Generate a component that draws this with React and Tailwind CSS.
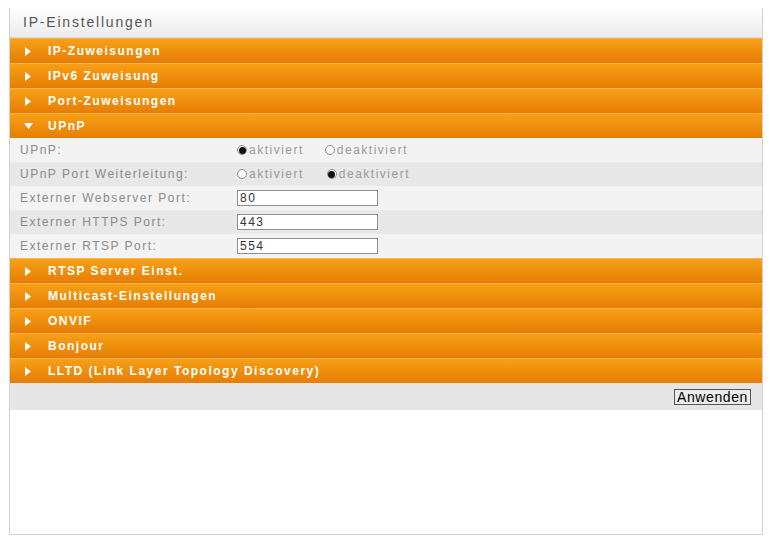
import { useState } from "react";

const sectionsTop = ["IP-Zuweisungen", "IPv6 Zuweisung", "Port-Zuweisungen"];
const sectionsBottom = [
  "RTSP Server Einst.",
  "Multicast-Einstellungen",
  "ONVIF",
  "Bonjour",
  "LLTD (Link Layer Topology Discovery)",
];

function Arrow({ open }) {
  return open ? (
    <svg width="9" height="6" viewBox="0 0 9 6" className="ml-[14px] mr-[15px]">
      <path d="M0 0 L9 0 L4.5 6 Z" fill="#fff" />
    </svg>
  ) : (
    <svg width="6" height="9" viewBox="0 0 6 9" className="ml-[15px] mr-[17px]">
      <path d="M0 0 L6 4.5 L0 9 Z" fill="#fff" />
    </svg>
  );
}

function Bar({ title, open }) {
  return (
    <div className="h-[25px] flex items-center border-t border-[#fab050] bg-gradient-to-b from-[#f7a015] to-[#e67d04] text-white font-bold text-[12px] tracking-[1.5px]">
      <Arrow open={open} />
      <span>{title}</span>
    </div>
  );
}

function Radio({ checked, label, onClick }) {
  return (
    <button onClick={onClick} className="flex items-center">
      <span className="w-[10px] h-[10px] rounded-full border border-[#8c8c8c] bg-white flex items-center justify-center">
        {checked && <span className="w-[7px] h-[7px] rounded-full bg-[#111]" />}
      </span>
      <span className="ml-[2px]">{label}</span>
    </button>
  );
}

function Row({ label, shade, children }) {
  return (
    <div className={`h-[24px] flex items-center ${shade ? "bg-[#e8e8e8]" : "bg-[#f3f3f3]"}`}>
      <div className="w-[227px] pl-[10px] text-[#8a8a8a]">{label}</div>
      <div className="flex items-center">{children}</div>
    </div>
  );
}

export default function App() {
  const [upnp, setUpnp] = useState(true);
  const [fwd, setFwd] = useState(false);
  const [web, setWeb] = useState("80");
  const [https, setHttps] = useState("443");
  const [rtsp, setRtsp] = useState("554");

  const inputCls =
    "w-[141px] h-[16px] border border-[#8f8f8f] bg-white px-[2px] text-[12px] text-[#333] outline-none";

  return (
    <div className="w-[770px] h-[537px] bg-white pt-[8px] pl-[9px]" style={{ fontFamily: '"Liberation Sans", Arial, sans-serif' }}>
      <div className="w-[754px] h-[527px] border-l border-r border-b border-[#d2d2d2] flex flex-col">
        <div className="h-[30px] flex items-center pl-[13px] bg-gradient-to-b from-white to-[#ebebeb] border-b border-[#d6dae8] text-[14px] tracking-[1.8px] text-[#555]">
          IP-Einstellungen
        </div>

        {sectionsTop.map((t) => (
          <Bar key={t} title={t} />
        ))}
        <Bar title="UPnP" open />

        <div className="text-[12px] tracking-[1.5px]">
          <Row label="UPnP:">
            <div className="flex items-center gap-[21px] text-[#9a9a9a]">
              <Radio checked={upnp} label="aktiviert" onClick={() => setUpnp(true)} />
              <Radio checked={!upnp} label="deaktiviert" onClick={() => setUpnp(false)} />
            </div>
          </Row>
          <Row label="UPnP Port Weiterleitung:" shade>
            <div className="flex items-center gap-[23px] text-[#9a9a9a]">
              <Radio checked={fwd} label="aktiviert" onClick={() => setFwd(true)} />
              <Radio checked={!fwd} label="deaktiviert" onClick={() => setFwd(false)} />
            </div>
          </Row>
          <Row label="Externer Webserver Port:">
            <input className={inputCls} value={web} onChange={(e) => setWeb(e.target.value)} />
          </Row>
          <Row label="Externer HTTPS Port:" shade>
            <input className={inputCls} value={https} onChange={(e) => setHttps(e.target.value)} />
          </Row>
          <Row label="Externer RTSP Port:">
            <input className={inputCls} value={rtsp} onChange={(e) => setRtsp(e.target.value)} />
          </Row>
        </div>

        {sectionsBottom.map((t) => (
          <Bar key={t} title={t} />
        ))}

        <div className="h-[27px] bg-[#e6e6e6] flex items-center justify-end pr-[11px]">
          <button className="h-[16px] px-[2px] border border-[#555] bg-[#ececec] text-[14px] leading-none tracking-[0.6px] text-black">
            Anwenden
          </button>
        </div>
        <div className="flex-1 bg-white" />
      </div>
    </div>
  );
}
